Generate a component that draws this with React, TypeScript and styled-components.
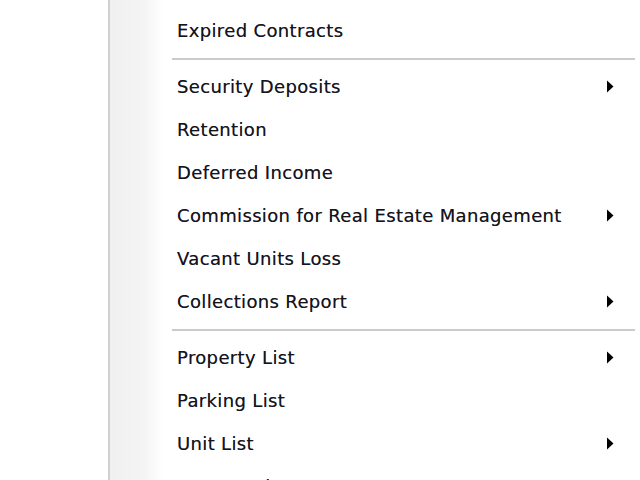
import * as React from "react";
import styled, { createGlobalStyle } from "styled-components";

const GlobalStyle = createGlobalStyle`
    html, body {
        margin: 0;
        padding: 0;
        background: #ffffff;
        overflow: hidden;
    }
`;

const Page = styled.div`
    display: flex;
    width: 640px;
    height: 480px;
    overflow: hidden;
    background: #ffffff;
`;

const Desk = styled.div`
    width: 108px;
    flex-shrink: 0;
    background: #ffffff;
`;

const Menu = styled.div`
    flex: 1;
    border-left: 2px solid #d0d0d0;
    padding-top: 9px;
    background: linear-gradient(
        to right,
        #f0f0f0 0px,
        #f4f4f4 34px,
        #fcfcfc 48px,
        #ffffff 52px
    );
    font-family: "DejaVu Sans", "Liberation Sans", sans-serif;
    font-size: 18px;
    color: #14141c;
`;

const Item = styled.div`
    display: flex;
    align-items: center;
    justify-content: space-between;
    height: 43px;
    padding: 0 26px 0 67px;
    letter-spacing: 0.35px;
    white-space: nowrap;
    text-shadow: 0 0 0.5px rgba(20, 20, 40, 0.6);
`;

const Separator = styled.div`
    height: 13px;
    display: flex;
    align-items: center;
    padding: 0 5px 0 62px;
    &::after {
        content: "";
        flex: 1;
        height: 2px;
        background: #cbcbcb;
    }
`;

const Arrow = () => (
    <svg width="8" height="13" viewBox="0 0 8 13">
        <path d="M1 0.5 L7.5 6.5 L1 12.5 Z" fill="#000" />
    </svg>
);

type Entry = { label: string; sub?: boolean } | "sep";

const entries: Entry[] = [
    { label: "Expired Contracts" },
    "sep",
    { label: "Security Deposits", sub: true },
    { label: "Retention" },
    { label: "Deferred Income" },
    { label: "Commission for Real Estate Management", sub: true },
    { label: "Vacant Units Loss" },
    { label: "Collections Report", sub: true },
    "sep",
    { label: "Property List", sub: true },
    { label: "Parking List" },
    { label: "Unit List", sub: true },
    { label: "Tenants List", sub: true },
];

export default function App() {
    return (
        <>
            <GlobalStyle />
            <Page>
                <Desk />
                <Menu>
                    {entries.map((e, i) =>
                        e === "sep" ? (
                            <Separator key={i} />
                        ) : (
                            <Item key={i}>
                                <span>{e.label}</span>
                                {e.sub && <Arrow />}
                            </Item>
                        ),
                    )}
                </Menu>
            </Page>
        </>
    );
}
